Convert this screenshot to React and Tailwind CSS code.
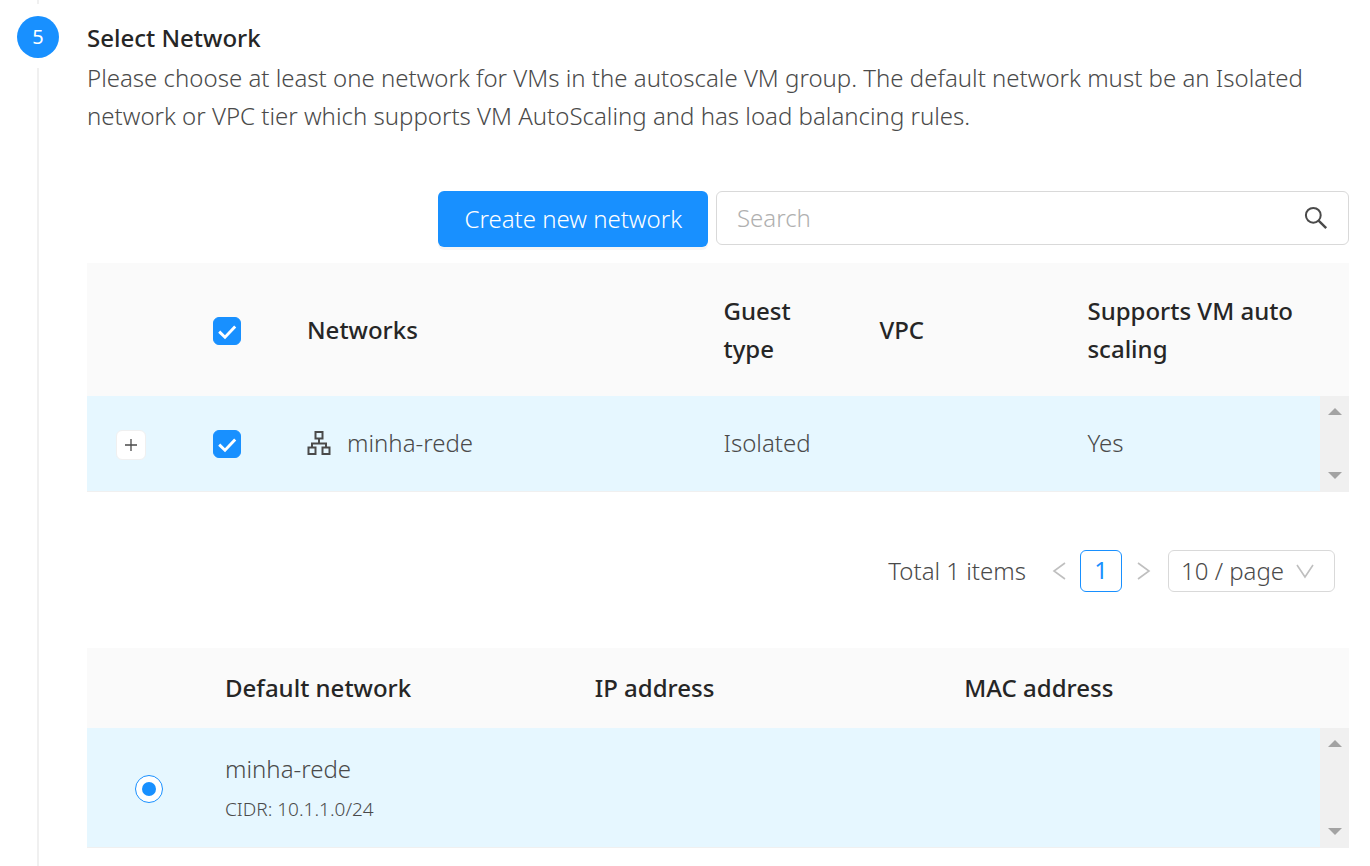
import { useState } from "react";

function SearchIcon() {
  return (
    <svg viewBox="0 0 24 24" className="size-6" fill="none" stroke="currentColor" strokeWidth="2" aria-hidden="true">
      <circle cx="9.3" cy="9.3" r="7.4" />
      <path d="M14.6 14.6 L22.2 22.2" strokeWidth="2.4" />
    </svg>
  );
}

function NetworkIcon() {
  return (
    <svg viewBox="0 0 24 24" className="size-6 shrink-0" fill="none" stroke="currentColor" strokeWidth="2" aria-hidden="true">
      <rect x="8.5" y="1" width="7" height="6.5" />
      <rect x="1.5" y="16.5" width="7" height="6.5" />
      <rect x="15.5" y="16.5" width="7" height="6.5" />
      <path d="M12 7.5 V12 M5 16 V12.5 H19 V16" />
    </svg>
  );
}

function Chevron({ d, className }) {
  return (
    <svg viewBox="0 0 18 18" className={className} fill="none" stroke="currentColor" strokeWidth="1.6" aria-hidden="true">
      <path d={d} />
    </svg>
  );
}

function CheckBox({ label }) {
  const [checked, setChecked] = useState(true);
  return (
    <label className="mx-auto mt-0.5 grid size-7 place-items-center">
      <input
        type="checkbox"
        aria-label={label}
        checked={checked}
        onChange={(e) => setChecked(e.target.checked)}
        className="peer col-start-1 row-start-1 size-7 appearance-none rounded-md border border-[#d9d9d9] bg-white checked:border-[#1890ff] checked:bg-[#1890ff]"
      />
      <svg viewBox="0 0 28 28" className="pointer-events-none col-start-1 row-start-1 hidden size-7 peer-checked:block" fill="none" stroke="white" strokeWidth="2.9" aria-hidden="true">
        <path d="M6.2 14.6 L12 20.2 L22.2 9.6" />
      </svg>
    </label>
  );
}

function ScrollTrack() {
  return (
    <div className="flex h-full flex-col items-center justify-between bg-[#f0f0f0] py-3 text-[#a3a3a3]">
      <button type="button" aria-label="Scroll up">
        <svg viewBox="0 0 14 7" className="h-[7px] w-[14px]" fill="currentColor" aria-hidden="true">
          <path d="M7 0 L14 7 H0 Z" />
        </svg>
      </button>
      <button type="button" aria-label="Scroll down">
        <svg viewBox="0 0 14 7" className="h-[7px] w-[14px]" fill="currentColor" aria-hidden="true">
          <path d="M0 0 H14 L7 7 Z" />
        </svg>
      </button>
    </div>
  );
}

function NetworkTable() {
  return (
    <table className="mt-4 w-full table-fixed text-left">
      <colgroup>
        <col className="w-[88px]" />
        <col className="w-[104px]" />
        <col className="w-[33%]" />
        <col className="w-[156px]" />
        <col className="w-[208px]" />
        <col />
        <col className="w-[29px]" />
      </colgroup>
      <thead className="bg-[#fafafa] text-[#262626]">
        <tr className="h-[133px]">
          <td />
          <th>
            <CheckBox label="Select all networks" />
          </th>
          <th className="px-7 font-medium">Networks</th>
          <th className="px-7 font-medium">Guest type</th>
          <th className="px-7 font-medium">VPC</th>
          <th className="pl-7 font-medium">Supports VM auto scaling</th>
          <td />
        </tr>
      </thead>
      <tbody>
        <tr className="h-[95px] border-b border-[#f0f0f0] bg-[#e6f7ff]">
          <td>
            <button type="button" aria-label="Expand row" className="mx-auto mt-1 grid size-[30px] place-items-center rounded-md border border-[#f0f0f0] bg-white">
              <svg viewBox="0 0 12 12" className="size-3" stroke="currentColor" strokeWidth="1.3" aria-hidden="true">
                <path d="M6 0 V12 M0 6 H12" />
              </svg>
            </button>
          </td>
          <td>
            <CheckBox label="Select minha-rede" />
          </td>
          <td className="px-7">
            <span className="flex items-center gap-4">
              <NetworkIcon />
              minha-rede
            </span>
          </td>
          <td className="px-7">Isolated</td>
          <td className="px-7" />
          <td className="px-7">Yes</td>
          <td className="h-[95px] p-0">
            <ScrollTrack />
          </td>
        </tr>
      </tbody>
    </table>
  );
}

function Pagination() {
  return (
    <nav aria-label="Pagination" className="mt-[58px] flex h-[42px] items-center justify-end pr-3.5">
      <span className="mr-6">Total 1 items</span>
      <button type="button" aria-label="Previous page" className="text-[#bfbfbf]">
        <Chevron d="M15 1 L4 9 L15 17" className="size-[18px]" />
      </button>
      <button type="button" aria-current="page" className="mx-3 h-[42px] w-[42px] rounded-md border border-[#1890ff] bg-white pb-1 font-normal text-[#1890ff]">
        1
      </button>
      <button type="button" aria-label="Next page" className="mr-4 text-[#bfbfbf]">
        <Chevron d="M4 1 L15 9 L4 17" className="size-[18px]" />
      </button>
      <span className="grid items-center">
        <select aria-label="Page size" defaultValue="10" className="col-start-1 row-start-1 h-[42px] w-[167px] appearance-none rounded-md border border-[#d9d9d9] bg-white pl-3">
          <option value="10">10 / page</option>
          <option value="20">20 / page</option>
          <option value="50">50 / page</option>
        </select>
        <Chevron d="M1 3 L9 15 L17 3" className="pointer-events-none col-start-1 row-start-1 mr-[21px] size-[18px] justify-self-end text-[#bfbfbf]" />
      </span>
    </nav>
  );
}

function DefaultNetworkTable() {
  return (
    <table className="mt-14 w-full table-fixed text-left">
      <colgroup>
        <col className="w-[124px]" />
        <col />
        <col />
        <col />
        <col className="w-[29px]" />
      </colgroup>
      <thead className="bg-[#fafafa] text-[#262626]">
        <tr className="h-20">
          <td />
          <th className="px-3.5 font-medium">Default network</th>
          <th className="px-3.5 font-medium">IP address</th>
          <th className="px-3.5 font-medium">MAC address</th>
          <td />
        </tr>
      </thead>
      <tbody>
        <tr className="h-[120px] border-b border-[#f0f0f0] bg-[#e6f7ff]">
          <td>
            <label className="mx-auto mt-1 grid size-7 place-items-center">
              <input type="radio" name="default-network" aria-label="minha-rede" defaultChecked className="peer col-start-1 row-start-1 size-7 appearance-none rounded-full border border-[#d9d9d9] bg-white checked:border-[#1890ff]" />
              <span className="pointer-events-none col-start-1 row-start-1 hidden size-3.5 rounded-full bg-[#1890ff] peer-checked:block" />
            </label>
          </td>
          <td className="px-3.5 pt-1.5">
            <div>minha-rede</div>
            <div className="text-[19px] leading-[42px]">CIDR: 10.1.1.0/24</div>
          </td>
          <td />
          <td />
          <td className="h-[120px] p-0">
            <ScrollTrack />
          </td>
        </tr>
      </tbody>
    </table>
  );
}

export default function App() {
  return (
    <main className="flex min-h-screen bg-white pl-[17px] pr-[21px] font-['Noto_Sans','Open_Sans',sans-serif] text-2xl font-light leading-[38px] text-[#4a4a4a]">
      <div className="flex w-[42px] shrink-0 flex-col items-center">
        <div className="h-1 w-0.5 bg-[#f0f0f0]" />
        <div className="mt-3 grid size-[42px] shrink-0 place-items-center rounded-full bg-[#1890ff] text-xl font-normal text-white">5</div>
        <div className="mt-2.5 w-0.5 grow bg-[#f0f0f0]" />
      </div>
      <section className="ml-7 min-w-0 grow pb-[18px] pt-[19px]">
        <h2 className="mb-0.5 font-medium text-[#262626]">Select Network</h2>
        <p>
          Please choose at least one network for VMs in the autoscale VM group. The default network must be an Isolated network or VPC tier which supports VM AutoScaling and has load balancing rules.
        </p>
        <div className="mt-14 flex items-start justify-end gap-2">
          <button type="button" className="h-14 rounded-md bg-[#1890ff] px-[26px] text-white shadow-[0_3px_0_rgba(0,0,0,0.04)]">
            Create new network
          </button>
          <div className="flex h-[54px] w-[633px] items-center rounded-md border border-[#d9d9d9] px-5">
            <input type="search" aria-label="Search" placeholder="Search" className="min-w-0 grow bg-transparent outline-none placeholder:text-[#b0b0b0]" />
            <button type="button" aria-label="Submit search">
              <SearchIcon />
            </button>
          </div>
        </div>
        <NetworkTable />
        <Pagination />
        <DefaultNetworkTable />
      </section>
    </main>
  );
}
